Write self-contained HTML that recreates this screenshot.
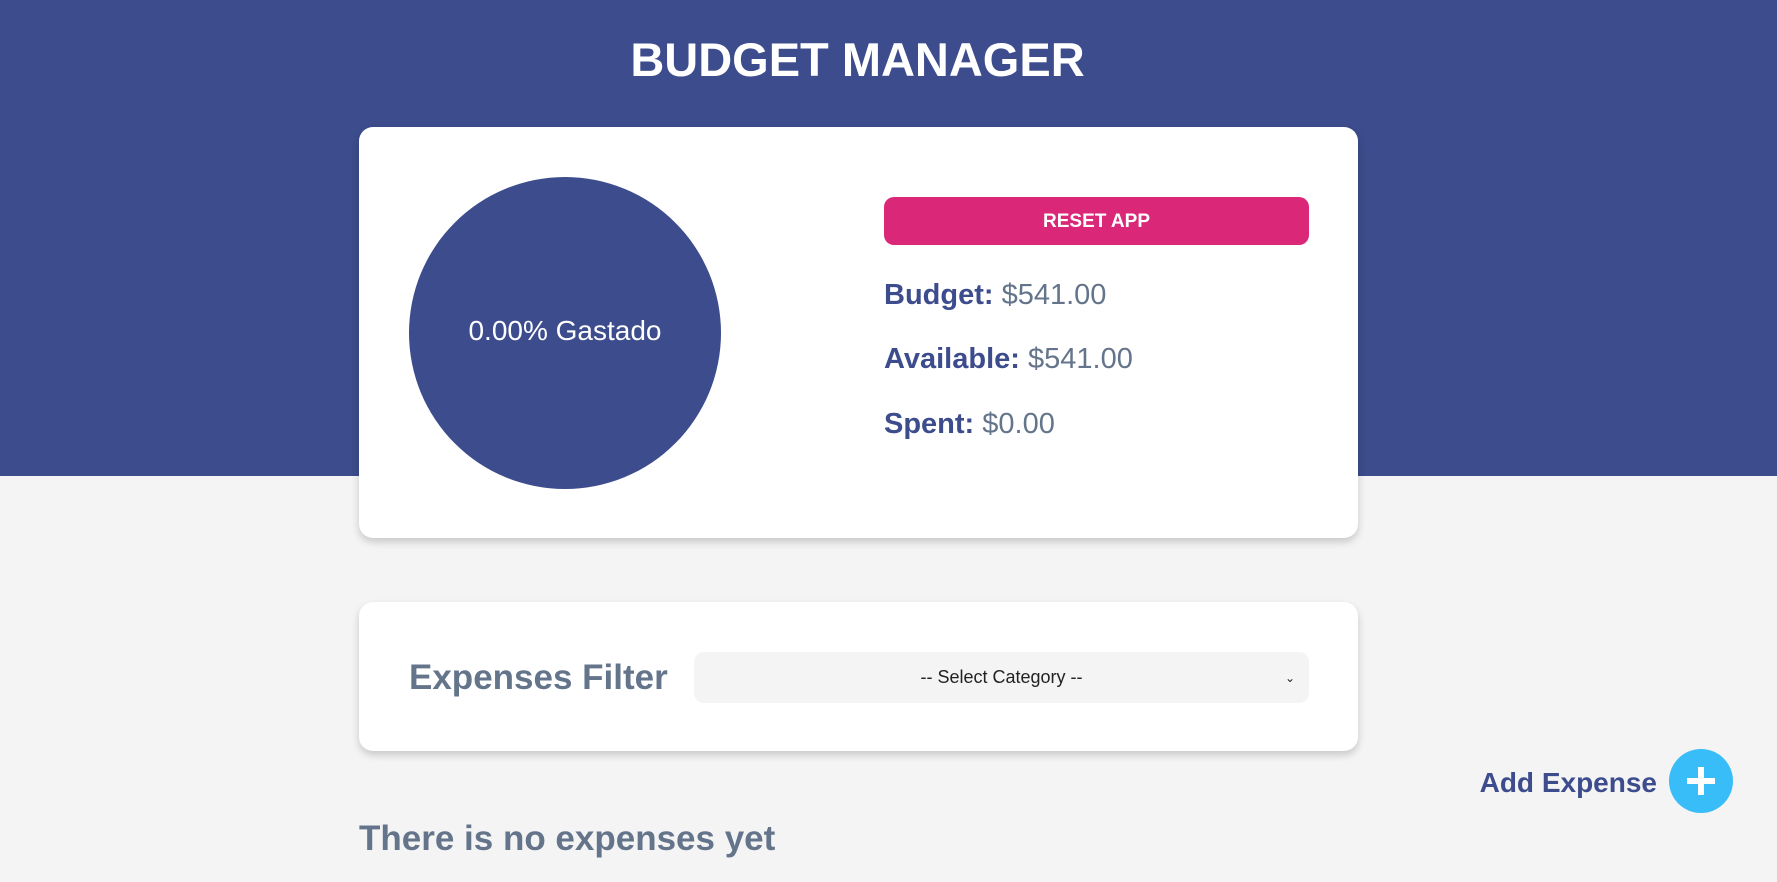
<!DOCTYPE html>
<html><head><style>
*{margin:0;padding:0;box-sizing:border-box}
body{width:1777px;height:882px;overflow:hidden;background:#f4f4f4;font-family:"Liberation Sans",sans-serif;position:relative}
.hdr{position:absolute;left:0;top:0;width:1777px;height:476px;background:#3c4c8c}
h1{position:absolute;top:32px;width:1777px;left:-31px;text-align:center;color:#fff;font-size:47px;font-weight:bold}
.card{position:absolute;left:359px;width:999px;background:#fff;border-radius:14px;box-shadow:0 4px 8px rgba(0,0,0,.18)}
.circ{position:absolute;left:50px;top:50px;width:312px;height:312px;border-radius:50%;background:#3c4c8c;color:#fff;font-size:28px;display:flex;align-items:center;justify-content:center;padding-bottom:4px}
.btn{position:absolute;left:525px;top:70px;width:425px;height:48px;background:#db2777;border-radius:10px;color:#fff;font-weight:bold;font-size:19px;display:flex;align-items:center;justify-content:center;padding-top:2px}
.ln{position:absolute;left:525px;font-size:29px;color:#64748b}
.ln b{color:#3c4c8c}
.f{position:absolute;left:50px;top:56px;font-size:35px;font-weight:bold;color:#64748b}
.sel{position:absolute;left:335px;top:50px;width:615px;height:51px;background:#f4f4f4;border-radius:10px;font-size:18px;display:flex;align-items:center;justify-content:center;color:#222}
</style></head><body>
<div class="hdr"></div>
<h1>BUDGET MANAGER</h1>
<div class="card" style="top:127px;height:411px">
<div class="circ">0.00% Gastado</div>
<div class="btn">RESET APP</div>
<div class="ln" style="top:152px"><b>Budget:</b> $541.00</div>
<div class="ln" style="top:216px"><b>Available:</b> $541.00</div>
<div class="ln" style="top:281px"><b>Spent:</b> $0.00</div>
</div>
<div class="card" style="top:602px;height:149px">
<div class="f">Expenses Filter</div>
<div class="sel">-- Select Category --<span style="position:absolute;right:14px;font-size:12px">&#8964;</span></div>
</div>
<div style="position:absolute;right:120px;top:767px;font-size:28px;font-weight:bold;color:#3c4c8c">Add Expense</div>
<div style="position:absolute;left:1669px;top:749px;width:64px;height:64px;border-radius:50%;background:#38bdf8">
<div style="position:absolute;left:18px;top:29px;width:28px;height:6px;background:#fff"></div>
<div style="position:absolute;left:29px;top:18px;width:6px;height:28px;background:#fff"></div>
</div>
<div style="position:absolute;left:359px;top:819px;font-size:35px;font-weight:bold;color:#64748b">There is no expenses yet</div>
</body></html>
